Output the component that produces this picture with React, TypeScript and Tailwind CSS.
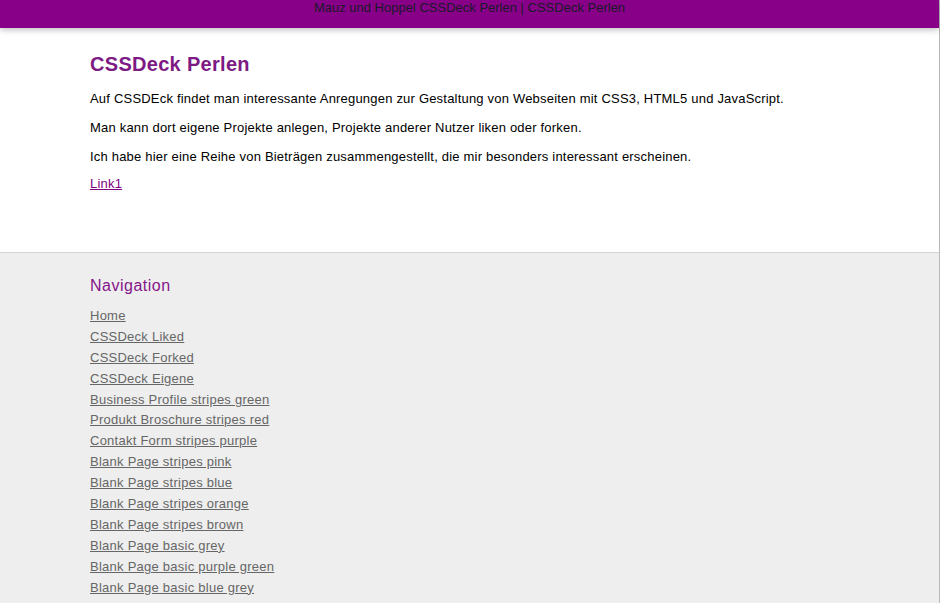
const LINKS = [
  "Home",
  "CSSDeck Liked",
  "CSSDeck Forked",
  "CSSDeck Eigene",
  "Business Profile stripes green",
  "Produkt Broschure stripes red",
  "Contakt Form stripes purple",
  "Blank Page stripes pink",
  "Blank Page stripes blue",
  "Blank Page stripes orange",
  "Blank Page stripes brown",
  "Blank Page basic grey",
  "Blank Page basic purple green",
  "Blank Page basic blue grey",
];

export default function App() {
  return (
    <div className="min-h-[603px] bg-[#eeeeee] font-['Liberation_Sans',Arial,sans-serif] border-r border-[#b8b8b8]">
      <header className="relative z-10 h-[28px] bg-[#880088] text-center text-[13px] leading-[16px] text-[#1a1a2a] shadow-[0_2px_6px_rgba(0,0,0,0.25)]">
        Mauz und Hoppel CSSDeck Perlen | CSSDeck Perlen
      </header>

      <main className="bg-white border-b border-[#d4d4d4] px-[90px] pt-[24px] pb-[60px]">
        <h1 className="text-[20px] leading-[24px] font-bold tracking-[0.3px] text-[#7d1a84] mb-[15px]">CSSDeck Perlen</h1>
        <div className="text-[13px] leading-[16px] tracking-[0.2px] text-black">
          <p className="mb-[13px]">
            Auf CSSDEck findet man interessante Anregungen zur Gestaltung von Webseiten mit CSS3, HTML5 und JavaScript.
          </p>
          <p className="mb-[13px]">
            Man kann dort eigene Projekte anlegen, Projekte anderer Nutzer liken oder forken.
          </p>
          <p className="mb-[11px]">
            Ich habe hier eine Reihe von Bieträgen zusammengestellt, die mir besonders interessant erscheinen.
          </p>
          <p>
            <a href="#" className="text-[#800080] underline">Link1</a>
          </p>
        </div>
      </main>

      <footer className="px-[90px] pt-[23px] pb-[10px]">
        <h2 className="text-[16px] leading-[20px] tracking-[0.5px] text-[#85158a] mb-[7px]">Navigation</h2>
        <ul className="flex flex-col">
          {LINKS.map((l) => (
            <li key={l} className="h-[20.9px]">
              <a href="#" className="text-[13px] leading-[16px] tracking-[0.25px] text-[#666666] underline">{l}</a>
            </li>
          ))}
        </ul>
      </footer>
    </div>
  );
}
